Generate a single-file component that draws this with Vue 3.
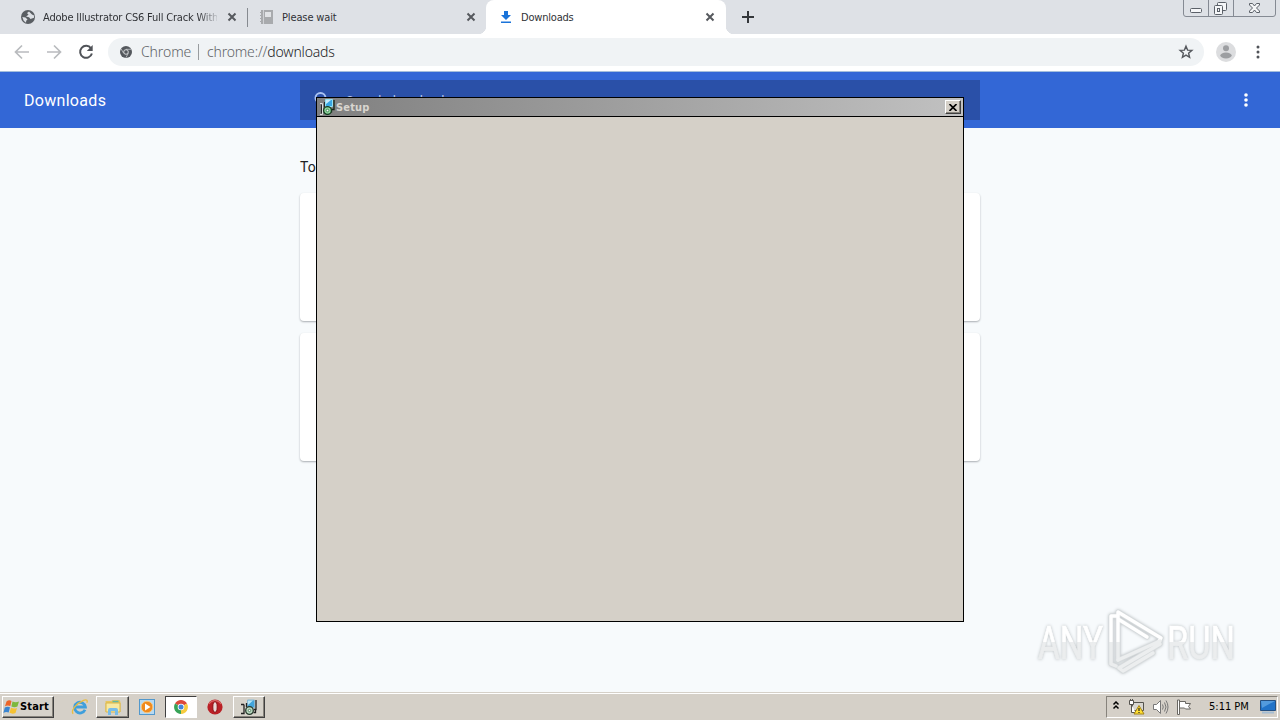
<template>
  <div class="desktop">
    <header class="tab-strip">
      <div class="tab tab-first">
        <svg class="favicon" width="16" height="16" viewBox="0 0 16 16">
          <circle cx="8" cy="8" r="7" fill="#5a5e63" />
          <path d="M9 2.500L7 4l1.500 1.800L6 7.500l3 .8 1.500 1.700 3.500-1.200V6.500l-2-1zM2.300 8l3.200.5 2 2-1.300 1.300-.2 2-2.300-2z" fill="#dee1e6" />
        </svg>
        <span class="tab-title fade">Adobe Illustrator CS6 Full Crack With</span>
        <svg class="tab-close" width="10" height="10" viewBox="0 0 10 10"><path d="M1.500 1.500l7 7M8.500 1.500l-7 7" /></svg>
      </div>
      <div class="tab tab-second">
        <svg class="favicon" width="16" height="16" viewBox="0 0 16 16">
          <path d="M2 1h12v14H2z" fill="#a8aaad" />
          <path d="M4.500 1v14" stroke="#cfd1d5" />
          <path d="M1 3.500h2M1 6.500h2M1 9.500h2M1 12.500h2" stroke="#a8aaad" />
          <path d="M6 3h6v5H6z" fill="#e1e3e6" />
        </svg>
        <span class="tab-title please">Please wait</span>
        <svg class="tab-close" width="10" height="10" viewBox="0 0 10 10"><path d="M1.500 1.500l7 7M8.500 1.500l-7 7" /></svg>
      </div>
      <div class="tab tab-active">
        <svg class="favicon" width="16" height="16" viewBox="0 0 16 16">
          <path d="M6 2h4v4h3L8 11 3 6h3zM3 12.500h10V14H3z" fill="#1a73d9" />
        </svg>
        <span class="tab-title downloads">Downloads</span>
        <svg class="tab-close" width="10" height="10" viewBox="0 0 10 10"><path d="M1.500 1.500l7 7M8.500 1.500l-7 7" /></svg>
      </div>
      <svg class="new-tab" width="14" height="14" viewBox="0 0 14 14"><path d="M7 1v12M1 7h12" stroke="#34373b" stroke-width="2" /></svg>
      <svg class="window-controls" width="94" height="18" viewBox="0 0 94 18" fill="none" stroke="#858a93">
        <path d="M.5 0v14q0 2.500 2.500 2.500h87q2.500 0 2.500-2.500V0M25.500 0v16.500M50.500 0v16.500" />
        <g stroke="#5b6068">
          <rect x="7.500" y="8.500" width="11" height="4" rx="1" fill="#f5f6f8" />
          <rect x="34.500" y="2.500" width="9" height="8" rx="1" fill="#f5f6f8" />
          <rect x="31.500" y="5.500" width="8" height="9" rx="1" fill="#f5f6f8" />
          <rect x="34.500" y="8.500" width="2" height="3" />
          <path d="M66.500 3.500h3l2 2.500 2-2.500h3v1.500l-3 3 3 3v1.500h-3l-2-2.500-2 2.500h-3V11l3-3-3-3z" fill="#f5f6f8" />
        </g>
      </svg>
    </header>

    <nav class="toolbar">
      <svg class="nav-icon" width="16" height="16" viewBox="0 0 16 16"><path d="M15 8H2M8 1.500L1.500 8 8 14.500" fill="none" stroke="#b9bbbe" stroke-width="1.700" /></svg>
      <svg class="nav-icon" width="16" height="16" viewBox="0 0 16 16"><path d="M1 8h13M8 1.500L14.500 8 8 14.500" fill="none" stroke="#b9bbbe" stroke-width="1.700" /></svg>
      <svg class="nav-icon" width="16" height="16" viewBox="0 0 16 16">
        <path d="M13 4.300A6 6 0 1 0 13.900 9.500" fill="none" stroke="#505358" stroke-width="2" />
        <path d="M14.700 1v6H8.800z" fill="#505358" />
      </svg>
      <div class="omnibox">
        <svg class="site-icon" width="12" height="12" viewBox="0 0 12 12">
          <circle cx="6" cy="6" r="6" fill="#54585d" />
          <path d="M6 3.300h5M3.700 7.300L1.200 3M8.300 7.300L5.900 11.700" stroke="#c5c8cb" stroke-width=".8" />
          <circle cx="6" cy="6" r="2.300" fill="#54585d" stroke="#e3e5e7" stroke-width=".9" />
        </svg>
        <span class="site-name">Chrome</span>
        <span class="separator"></span>
        <span class="url">chrome://<b>downloads</b></span>
        <svg class="star" width="16" height="16" viewBox="0 0 16 16"><path d="M8 2.200l1.600 3.900 4.300.3-3.300 2.800 1 4.100L8 11.100l-3.600 2.200 1-4.100L2.100 6.400l4.300-.3z" fill="none" stroke="#55585d" stroke-width="1.400" /></svg>
      </div>
      <svg class="avatar" width="20" height="20" viewBox="0 0 20 20">
        <circle cx="10" cy="10" r="10" fill="#dcdddf" />
        <circle cx="10" cy="6.200" r="3" fill="#9c9ea1" />
        <ellipse cx="10" cy="13.500" rx="5.700" ry="2.900" fill="#9c9ea1" />
      </svg>
      <svg class="menu-dots" width="4" height="14" viewBox="0 0 4 14" fill="#505358"><circle cx="2" cy="2" r="1.500" /><circle cx="2" cy="7" r="1.500" /><circle cx="2" cy="12" r="1.500" /></svg>
    </nav>

    <section class="page-header">
      <h1>Downloads</h1>
      <div class="search">
        <svg width="18" height="18" viewBox="0 0 18 18" fill="none" stroke="#a9c2f2" stroke-width="2"><circle cx="6.500" cy="7" r="5" /><path d="M10.500 11l6 6" /></svg>
        <span>Search downloads</span>
      </div>
      <svg class="page-menu" width="4" height="14" viewBox="0 0 4 14" fill="#fff"><circle cx="2" cy="2" r="1.800" /><circle cx="2" cy="7" r="1.800" /><circle cx="2" cy="12" r="1.800" /></svg>
    </section>

    <main class="page-body">
      <div class="date">Today</div>
      <div v-for="n in 2" :key="n" class="card"></div>
    </main>

    <footer class="taskbar">
      <div class="raised start">
        <svg width="17" height="16" viewBox="0 0 17 16">
          <path d="M3.500 2.500Q6 .5 8.500 2L7.300 7Q4.500 5.800 2 7.300z" fill="#ec652a" />
          <path d="M9.500 2.500q3 1.500 6.500 0l-1.600 5q-3 1.500-6-.1z" fill="#7db83c" />
          <path d="M1.800 8.500Q4.500 7 7 8.200L5.700 13.500Q3 12.300.4 13.900z" fill="#3a85d1" />
          <path d="M8 8.800q3 1.500 6 .1l-1.500 5q-3 1.500-6-.1z" fill="#f5c233" />
        </svg>
        <span>Start</span>
      </div>
      <div class="launch ie">
        <svg width="18" height="18" viewBox="0 0 18 18">
          <path d="M14 11.800A5.400 5.400 0 1 1 14.400 9H5" fill="none" stroke="#3f9fdc" stroke-width="2.800" />
          <path d="M2.200 15.800C-.5 13 5 5.500 12.500 2.300c3.500-1.200 4.300.4 3.300 2.500" fill="none" stroke="#e9bd42" stroke-width="1.300" />
        </svg>
      </div>
      <div class="raised launch explorer">
        <svg width="18" height="18" viewBox="0 0 18 18">
          <path d="M1.500 3h6l1-1h7l1 2v10h-15z" fill="#e8c65e" />
          <path d="M2 5h14v9H2z" fill="#f8e9a1" stroke="#d9b64b" />
          <path d="M8.500 3.500h6" stroke="#62b8a4" stroke-width="1.500" />
          <path d="M4 17v-5q0-2 2-2h6q2 0 2 2v5h-3v-4H7v4z" fill="#78bce8" />
        </svg>
      </div>
      <div class="launch media">
        <svg width="16" height="16" viewBox="0 0 16 16">
          <rect x=".5" y=".5" width="15" height="15" fill="#b7d9f1" stroke="#5298cc" />
          <circle cx="8" cy="8" r="5.800" fill="#f08a1d" stroke="#f9c57a" />
          <path d="M6 4.500l5.500 3.500L6 11.500z" fill="#fff" />
        </svg>
      </div>
      <div class="launch chrome">
        <svg width="14" height="14" viewBox="0 0 14 14">
          <path d="M7 7L1 3.500A7 7 0 0 1 13 3.500z" fill="#dc493a" />
          <path d="M7 7L1 3.500A7 7 0 0 0 7 14z" fill="#37a357" />
          <path d="M7 7l6-3.500A7 7 0 0 1 7 14z" fill="#f6cb3e" />
          <circle cx="7" cy="7" r="3.300" fill="#fff" /><circle cx="7" cy="7" r="2.500" fill="#4285d9" />
        </svg>
      </div>
      <div class="launch opera">
        <svg width="16" height="16" viewBox="0 0 16 16">
          <circle cx="8" cy="8" r="7.600" fill="#ba2026" />
          <path d="M2 5a7 7 0 0 1 12 0" fill="none" stroke="#d96a68" stroke-width="1.200" />
          <ellipse cx="8" cy="8" rx="2.200" ry="5.300" fill="#ead8d5" stroke="#8b1014" />
        </svg>
      </div>
      <div class="raised launch installer">
        <svg width="16" height="16" viewBox="0 0 16 16">
          <path d="M6.500 1h7v7.500h-7z" fill="#42a5dc" stroke="#89b8d2" />
          <path d="M7 1.500h5L7 6z" fill="#b8e5f5" />
          <path d="M15 1v9.500h-2M12.500 13.500h2v-3M0 5.500h3M3 5.500v9H0M5.500 4v4" fill="none" stroke="#222" stroke-width="1.300" />
          <circle cx="8.500" cy="11.500" r="3.800" fill="#b9d9c1" stroke="#26382c" stroke-width="1.300" />
          <circle cx="8.500" cy="11.500" r="1.200" fill="#fff" stroke="#3c6a49" stroke-width=".8" />
        </svg>
      </div>

      <div class="tray">
        <svg class="chevrons" width="8" height="10" viewBox="0 0 8 10"><path d="M1.500 3.500L4 1l2.500 2.500M1.500 7.500L4 5l2.500 2.500" fill="none" stroke="#000" stroke-width="1.500" /></svg>
        <svg class="network" width="17" height="16" viewBox="0 0 17 16">
          <path d="M4.500 3.500h11v8h-11z" fill="#d9d7d1" stroke="#55534e" />
          <path d="M1.500 1.500h4v4h-4zM3.500 5.500v8h4" fill="#fff" stroke="#55534e" />
          <path d="M5 13.500h5M2.500 0v2M4.500 0v2" stroke="#55534e" />
          <path d="M11 6.500l5 8.500H6z" fill="#ffdf32" stroke="#a48419" />
          <path d="M11 9v3M11 13v1" stroke="#222" stroke-width="1.200" />
        </svg>
        <svg class="speaker" width="17" height="16" viewBox="0 0 17 16" fill="none" stroke="#777">
          <path d="M1.500 5.500h3l4-4v13l-4-4h-3z" fill="#fff" />
          <path d="M10.500 5.500q1.500 2.500 0 5M12.500 3.500q3 4.500 0 9M14 1.500q4 6.500 0 13" />
        </svg>
        <svg class="flag" width="16" height="16" viewBox="0 0 16 16">
          <path d="M1.500 1v14.500h2V1zM3.500 2.500h6v2h5l-2 3 2 2.500h-5l-1-1h-5z" fill="#fff" stroke="#696762" />
        </svg>
        <span class="clock">5:11 PM</span>
        <svg class="show-desktop" width="16" height="14" viewBox="0 0 16 14">
          <path d="M.5 .5h15v10H.5z" fill="#2173c8" stroke="#255081" />
          <path d="M1 1h14L2 8z" fill="#539bdd" />
          <path d="M2 12.500h12" stroke="#a4bdd3" stroke-width="2" />
        </svg>
      </div>
    </footer>

    <div class="setup-window">
      <div class="title-bar">
        <svg class="setup-icon" width="16" height="16" viewBox="0 0 16 16">
          <path d="M6.500 .5h7v7h-7z" fill="#3aa7e4" stroke="#93e1f2" />
          <path d="M7 1h5L7 5z" fill="#c9ecfa" />
          <path d="M15 1v9.500h-2.500v3" fill="none" stroke="#172418" stroke-width="1.300" />
          <path d="M1 4.500h2.500v11H1" fill="none" stroke="#ddd" />
          <path d="M2.500 5.500v9M5.500 3v5" stroke="#282828" />
          <circle cx="8.500" cy="11.500" r="3.900" fill="#8bd49b" stroke="#153b20" stroke-width="1.300" />
          <circle cx="8.500" cy="11.500" r="1.300" fill="#fff" stroke="#2f7544" stroke-width=".8" />
        </svg>
        <span class="setup-title">Setup</span>
        <div class="setup-close">
          <svg width="8" height="7" viewBox="0 0 8 7"><path d="M.5 0l7 7M7.500 0l-7 7" stroke="#000" stroke-width="1.600" /></svg>
        </div>
      </div>
    </div>

    <svg class="watermark" width="210" height="76" viewBox="0 0 210 76" fill="none">
      <defs>
        <linearGradient id="split" x1="0" y1="0" x2="0" y2="72" gradientUnits="userSpaceOnUse">
          <stop offset=".52" stop-color="#fff" />
          <stop offset=".52" stop-color="#ebedee" />
        </linearGradient>
      </defs>
      <g class="brand" fill="url(#split)" stroke="url(#split)">
        <text x="2" y="54" textLength="65" lengthAdjust="spacingAndGlyphs">ANY</text>
        <text x="131" y="54" textLength="68" lengthAdjust="spacingAndGlyphs">RUN</text>
      </g>
      <g stroke-linejoin="round" stroke-linecap="round">
        <path d="M80 11h-5v48l5 2M82 55V7l43 26-3 5M82 14l29 18" stroke="#d7dbdd" stroke-width="5" />
        <path d="M82 55l42-19M83 63l41-24M83 63l4 3 30-18" stroke="#d7dbdd" stroke-width="5" />
        <path d="M80 11h-5v48l5 2M82 55V7l43 26-3 5M82 14l29 18" stroke="url(#split)" stroke-width="3.400" />
        <path d="M82 55l42-19M83 63l41-24M83 63l4 3 30-18" stroke="#eceeef" stroke-width="3.400" />
      </g>
    </svg>
  </div>
</template>

<script setup>
</script>

<style>
body {
  margin: 0;
  overflow: hidden;
}
</style>

<style scoped>
.desktop {
  position: relative;
  display: flex;
  flex-direction: column;
  width: 1280px;
  height: 720px;
  overflow: hidden;
  background: #f7fafc;
  font-family: "DejaVu Sans Condensed", "DejaVu Sans", sans-serif;
  font-size: 11px;
  color: #303236;
}

.desktop * {
  box-sizing: border-box;
}

svg {
  display: block;
  flex-shrink: 0;
}

.tab-strip {
  display: flex;
  height: 34px;
  background: #dee1e6;
}

.tab {
  display: flex;
  align-items: center;
  height: 34px;
}

.tab-first {
  width: 248px;
  padding-left: 20px;
  background: linear-gradient(#868a90, #868a90) right 8px / 1px 19px no-repeat;
}

.tab-second {
  width: 238px;
  padding-left: 11px;
}

.tab-active {
  position: relative;
  width: 240px;
  padding-left: 12px;
  background: #fff;
  border-radius: 8px 8px 0 0;
}

.tab-active::before,
.tab-active::after {
  content: "";
  position: absolute;
  bottom: 0;
  width: 8px;
  height: 8px;
}

.tab-active::before {
  left: -8px;
  background: radial-gradient(circle at 0 0, transparent 8px, #fff 8.500px);
}

.tab-active::after {
  right: -8px;
  background: radial-gradient(circle at 100% 0, transparent 8px, #fff 8.500px);
}

.tab-title {
  margin-left: 7px;
  padding-top: 1px;
  white-space: nowrap;
  line-height: 16px;
}

.tab-title.fade {
  width: 174px;
  overflow: hidden;
  letter-spacing: -0.180px;
  -webkit-mask-image: linear-gradient(90deg, #000 155px, transparent 178px);
  mask-image: linear-gradient(90deg, #000 155px, transparent 178px);
}

.please {
  letter-spacing: -0.130px;
}

.downloads {
  letter-spacing: -0.200px;
}

.tab-close {
  margin: 0 11px 0 auto;
  fill: none;
  stroke: #56595e;
  stroke-width: 2;
}

.tab-second .tab-close {
  margin-right: 10px;
}

.new-tab {
  margin: 10px 0 0 15px;
}

.window-controls {
  margin-left: auto;
  margin-right: 3px;
}

.toolbar {
  display: flex;
  align-items: center;
  height: 38px;
  padding: 0 20px 1px 14px;
  background: #fff;
  border-bottom: 1px solid #a4bfdc;
}

.nav-icon {
  margin-right: 16px;
}

.omnibox {
  display: flex;
  align-items: center;
  width: 1096px;
  height: 28px;
  margin-left: -2px;
  padding: 0 10px 0 12px;
  border-radius: 14px;
  background: #f0f3f5;
  color: #606367;
  font-family: "Noto Sans", sans-serif;
  font-size: 14px;
  font-weight: 300;
}

.site-name,
.url {
  padding-bottom: 2px;
}

.site-name {
  width: 50px;
  margin-left: 9px;
  letter-spacing: -0.100px;
}

.separator {
  width: 1px;
  height: 16px;
  margin: 0 8px 0 7px;
  background: #999c9f;
}

.url {
  letter-spacing: -0.180px;
}

.url b {
  color: #1c1d1f;
  font-weight: 300;
}

.star {
  margin-left: auto;
}

.avatar {
  margin-left: 12px;
}

.menu-dots {
  margin-left: auto;
}

.page-header {
  display: flex;
  align-items: center;
  height: 56px;
  padding: 0 32px 0 24px;
  background: #3367d6;
  color: #fff;
  font-family: Roboto, sans-serif;
}

.page-header h1 {
  width: 276px;
  margin: 0;
  font-size: 16px;
  font-weight: 400;
  letter-spacing: 0.300px;
}

.search {
  display: flex;
  align-items: center;
  width: 680px;
  height: 40px;
  padding-left: 14px;
  background: #2a50a8;
  color: #b5c8ef;
  font-size: 13px;
}

.search span {
  margin-left: 14px;
  letter-spacing: -0.100px;
}

.page-menu {
  margin-left: auto;
}

.page-body {
  flex: 1;
  width: 680px;
  margin: 0 auto;
  padding-top: 30px;
}

.date {
  height: 35px;
  color: #202124;
  font-family: Roboto, sans-serif;
  font-size: 14px;
  line-height: 18px;
}

.card {
  height: 128px;
  margin-bottom: 12px;
  border-radius: 4px;
  background: #fff;
  box-shadow: 0 1px 2px #a9adb2;
}

.taskbar {
  display: flex;
  align-items: center;
  height: 28px;
  padding: 2px 2px 2px;
  background: #d5d0c8;
  border-top: 1px solid #d5d0c8;
  box-shadow: inset 0 1px #fff;
}

.raised {
  background: #d6d2ca;
  border: 1px solid;
  border-color: #fff #404040 #404040 #fff;
  box-shadow: inset -1px -1px #87837c;
}

.start {
  display: flex;
  align-items: center;
  width: 52px;
  height: 22px;
  color: #000;
  font-weight: bold;
}

.start span {
  letter-spacing: 0.150px;
}

.launch {
  display: flex;
  align-items: center;
  justify-content: center;
  width: 32px;
  height: 22px;
}

.ie {
  margin-left: 10px;
}

.explorer {
  width: 33px;
}

.media {
  margin-left: 2px;
}

.chrome {
  margin-left: 2px;
  background: #fff;
  border: 1px solid;
  border-color: #404040 #fff #fff #404040;
}

.opera {
  margin-left: 2px;
}

.installer {
  margin-left: 2px;
}

.tray {
  display: flex;
  align-items: center;
  width: 172px;
  height: 22px;
  margin-left: auto;
  padding-left: 5px;
  border: 1px solid;
  border-color: #87837c #fff #fff #87837c;
  color: #000;
}

.chevrons {
  margin-top: -2px;
}

.network {
  margin-left: 8px;
}

.speaker {
  margin-left: 7px;
}

.flag {
  margin-left: 7px;
}

.clock {
  width: 42px;
  margin-left: 17px;
  white-space: nowrap;
}

.show-desktop {
  margin-left: 9px;
}

.setup-window {
  position: absolute;
  left: 316px;
  top: 97px;
  width: 648px;
  height: 525px;
  border: 1px solid #000;
  background: #d5d0c8;
}

.title-bar {
  display: flex;
  align-items: center;
  height: 19px;
  padding: 0 2px 0 2px;
  border-bottom: 1px solid #000;
  background: linear-gradient(90deg, #808080, #c1c1c1);
  color: #d9d6d0;
  font-weight: bold;
}

.setup-title {
  margin-left: 1px;
  letter-spacing: 0.150px;
}

.setup-close {
  display: flex;
  align-items: center;
  justify-content: center;
  width: 16px;
  height: 14px;
  margin-left: auto;
  border: 1px solid;
  border-color: #fff #404040 #404040 #fff;
  background: #d5d0c8;
  box-shadow: inset -1px -1px #87837c;
}

.watermark {
  position: absolute;
  left: 1036px;
  top: 605px;
  filter: drop-shadow(0 0 1.500px #b9bec1);
}

.brand {
  font-family: Roboto, sans-serif;
  font-size: 47px;
  stroke-width: 0.700px;
}
</style>
